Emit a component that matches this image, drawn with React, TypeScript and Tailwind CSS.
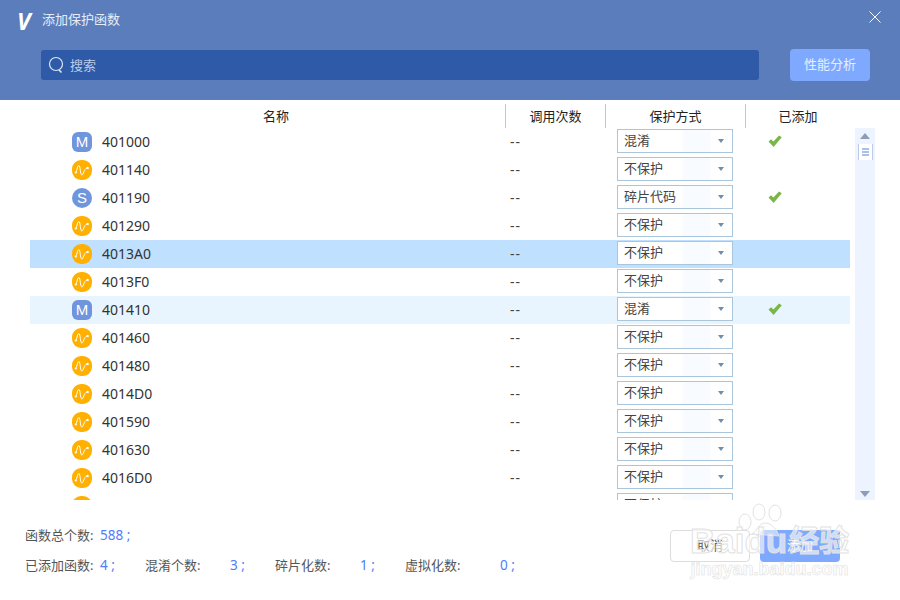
interface Row {
  id: string
  kind: "M" | "S" | "F"
  mode: string
  added?: boolean
  bg?: string
}

const ROWS: Row[] = [
  { id: "401000", kind: "M", mode: "混淆", added: true },
  { id: "401140", kind: "F", mode: "不保护" },
  { id: "401190", kind: "S", mode: "碎片代码", added: true },
  { id: "401290", kind: "F", mode: "不保护" },
  { id: "4013A0", kind: "F", mode: "不保护", bg: "bg-[#bfe1ff]" },
  { id: "4013F0", kind: "F", mode: "不保护" },
  { id: "401410", kind: "M", mode: "混淆", added: true, bg: "bg-[#e8f5ff]" },
  { id: "401460", kind: "F", mode: "不保护" },
  { id: "401480", kind: "F", mode: "不保护" },
  { id: "4014D0", kind: "F", mode: "不保护" },
  { id: "401590", kind: "F", mode: "不保护" },
  { id: "401630", kind: "F", mode: "不保护" },
  { id: "4016D0", kind: "F", mode: "不保护" },
  { id: "401700", kind: "F", mode: "不保护" },
]

function KindIcon({ kind }: { kind: Row["kind"] }) {
  if (kind === "F") {
    return (
      <span className="flex h-5 w-5 shrink-0 items-center justify-center rounded-[9px] bg-[#ffb000]">
        <svg width="16" height="13" viewBox="0 0 16 13" fill="none" stroke="white" strokeWidth="1">
          <path d="M1.5 8.5 C3 8.5 3 1.5 4.8 1.5 C6.6 1.5 6 11 7.8 11 C9.6 11 9.6 5 13 4" />
          <circle cx="1.8" cy="8.5" r="1.1" fill="white" stroke="none" />
          <circle cx="13.6" cy="3.9" r="1.2" fill="white" stroke="none" />
        </svg>
      </span>
    )
  }
  return (
    <span
      className={`flex h-5 w-5 shrink-0 items-center justify-center bg-[#6f95dc] font-['Liberation_Sans',sans-serif] text-[15px] text-white ${
        kind === "M" ? "rounded-[6px]" : "rounded-[10px]"
      }`}
    >
      {kind}
    </span>
  )
}

function Check() {
  return (
    <svg width="14" height="13" viewBox="0 0 14 13" className="mb-[2px] ml-[22px]">
      <path d="M0.5 6.5 L3.2 4.2 L5.4 6.6 L11 0.5 L13.8 2.2 L5.6 12 Z" fill="#7ab648" />
    </svg>
  )
}

function Arrow({ up }: { up?: boolean }) {
  return (
    <svg width="10" height="6" viewBox="0 0 10 6">
      <path d={up ? "M0 6 L5 0 L10 6 Z" : "M0 0 L10 0 L5 6 Z"} fill="#8d9db8" />
    </svg>
  )
}

function Stat({ label, value, labelW }: { label: string; value: string; labelW: string }) {
  return (
    <span className="flex">
      <span className={`text-[#555] ${labelW}`}>{label}</span>
      <span className="text-[13.5px] text-[#4f7cff]">{value} ;</span>
    </span>
  )
}

export default function App() {
  return (
    <div className="relative flex h-[600px] w-[900px] flex-col overflow-hidden bg-white font-['Noto_Sans','Noto_Sans_CJK_SC',sans-serif] text-[14px] text-[#333]">
      <header className="h-[100px] shrink-0 bg-[#5b7dbc] text-white">
        <div className="flex h-[49px] items-start justify-between pl-[17px] pr-[19px] pt-[7px]">
          <div className="flex items-center gap-[10px]">
            <span className="w-[15px] text-[23px] font-bold italic leading-[24px]">V</span>
            <span className="pb-[4px] text-[13px] leading-[24px] text-[#e6edf8]">添加保护函数</span>
          </div>
          <svg width="12" height="12" viewBox="0 0 12 12" stroke="white" strokeWidth="1" className="mt-[4px]">
            <path d="M0.5 0.5 L11.5 11.5 M11.5 0.5 L0.5 11.5" />
          </svg>
        </div>
        <div className="flex items-center justify-between pl-[41px] pr-[30px]">
          <div className="flex h-[30px] w-[718px] items-center gap-[6px] rounded-[3px] bg-[#2e5aa8] pl-[7px]">
            <svg width="16" height="18" viewBox="0 0 16 18" fill="none" stroke="#dbe6f7" strokeWidth="1.2">
              <circle cx="8" cy="8" r="6.5" />
              <path d="M11 14 L13.5 16.5" strokeWidth="1.6" />
            </svg>
            <span className="pt-[2px] text-[13px] text-[#b9cbea]">搜索</span>
          </div>
          <button className="h-[32px] w-[80px] rounded-[4px] bg-[#7fa9ff] text-[13px] text-[#e6eeff]">性能分析</button>
        </div>
      </header>

      <div className="flex h-[28px] shrink-0 pt-[4px] text-[13px] leading-[24px] text-[#222]">
        <div className="w-[505px] pl-[47px] text-center">名称</div>
        <div className="w-[100px] border-l border-[#b6cbd8] text-center">调用次数</div>
        <div className="w-[140px] border-l border-[#b6cbd8] text-center">保护方式</div>
        <div className="w-[105px] border-l border-[#b6cbd8] text-center">已添加</div>
      </div>

      <div className="flex h-[372px] shrink-0 pl-[30px]">
        <div className="h-full w-[820px] overflow-hidden">
          {ROWS.map((row) => (
            <div key={row.id} className={`flex h-[28px] items-center ${row.bg ?? ""}`}>
              <div className="flex w-[475px] items-center gap-[10px] pl-[42px]">
                <KindIcon kind={row.kind} />
                <span className="pb-[2px]">{row.id}</span>
              </div>
              <div className="w-[112px] pb-[2px] pl-[5px] tracking-[1px] text-[#444]">--</div>
              <div className="mb-[2px] flex h-[24px] w-[116px] items-center justify-between border border-[#a9c6dc] bg-[linear-gradient(90deg,#fff_55%,#f8fbff_58%,#f8fbff_80%,#fff_82%)] pl-[6px] pr-[8px] text-[13px]">
                <span className="text-[#444]">{row.mode}</span>
                <span className="h-0 w-0 border-x-[3.5px] border-t-[4px] border-x-transparent border-t-[#6f8eae]" />
              </div>
              <div className="flex-1 pl-[13px]">{row.added && <Check />}</div>
            </div>
          ))}
        </div>
        <div className="ml-[5px] flex w-[20px] flex-col items-center justify-between bg-[#edf3ff] pb-[3px] pt-[5px]">
          <div className="flex flex-col items-center gap-[5px]">
            <Arrow up />
            <div className="flex h-[16px] w-[15px] flex-col items-center justify-center gap-[1px] border-x border-[#bccbe6] bg-white">
              <span className="h-[2px] w-[7px] bg-[#a9c1e6]" />
              <span className="h-[2px] w-[7px] bg-[#a9c1e6]" />
              <span className="h-[2px] w-[7px] bg-[#a9c1e6]" />
            </div>
          </div>
          <Arrow />
        </div>
      </div>

      <div className="flex flex-1 items-start justify-between pl-[25px] pr-[60px] pt-[30px]">
        <div className="-mt-[5px] flex flex-col gap-[10px] text-[13px] leading-[20px]">
          <div className="flex">
            <Stat label="函数总个数:" value="588" labelW="w-[75px]" />
          </div>
          <div className="flex">
            <span className="w-[120px]"><Stat label="已添加函数:" value="4" labelW="w-[75px]" /></span>
            <span className="w-[130px]"><Stat label="混淆个数:" value="3" labelW="w-[85px]" /></span>
            <span className="w-[130px]"><Stat label="碎片化数:" value="1" labelW="w-[85px]" /></span>
            <span><Stat label="虚拟化数:" value="0" labelW="w-[95px]" /></span>
          </div>
        </div>
        <div className="flex gap-[10px] text-[13px]">
          <button className="h-[32px] w-[80px] rounded-[4px] border border-[#ddd] bg-white text-[#555]">取消</button>
          <button className="h-[32px] w-[80px] rounded-[4px] bg-[#7fa9ff] text-white">添加</button>
        </div>
      </div>

      {/* baidu watermark over the bottom right */}
      <div className="pointer-events-none absolute left-[690px] top-[503px] flex flex-col items-center">
        <svg width="60" height="34" viewBox="0 0 60 34" className="-mb-[14px] ml-[-10px]" fill="#fff" fillOpacity="0.5" stroke="#e2e2e2">
          <ellipse cx="10" cy="19" rx="6" ry="8" />
          <ellipse cx="24" cy="9" rx="6" ry="8" />
          <ellipse cx="40" cy="10" rx="6" ry="8" />
          <path d="M30 20 C24 20 22 28 17 31 L44 33 C42 26 36 20 30 20 Z" />
        </svg>
        <div className="flex items-center font-['Liberation_Sans','Noto_Sans_CJK_SC',sans-serif] text-[35px] font-bold leading-[36px] text-white/60 [-webkit-text-stroke:1px_#e2e2e2]">
          Baidu<span className="ml-[2px] text-[30px]">经验</span>
        </div>
        <div className="font-['Liberation_Sans',sans-serif] text-[18px] font-bold leading-[20px] text-white/60 [-webkit-text-stroke:0.6px_#e2e2e2]">
          jingyan.baidu.com
        </div>
      </div>
    </div>
  )
}
